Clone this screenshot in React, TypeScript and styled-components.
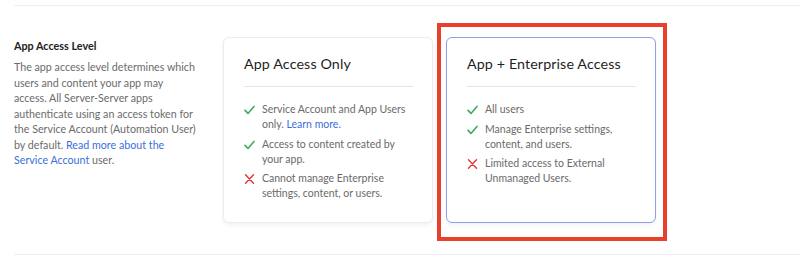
import styled, { createGlobalStyle } from 'styled-components'

const GlobalStyle = createGlobalStyle`
  html, body {
    margin: 0;
    padding: 0;
    background: #fff;
  }
  body {
    font-family: Lato, "Open Sans", Arial, sans-serif;
    -webkit-font-smoothing: antialiased;
  }
`

interface Feature {
  ok: boolean
  text: string
  link?: string
}

interface Plan {
  title: string
  selected?: boolean
  features: Feature[]
}

const plans: Plan[] = [
  {
    title: 'App Access Only',
    features: [
      { ok: true, text: 'Service Account and App Users only.', link: 'Learn more.' },
      { ok: true, text: 'Access to content created by your app.' },
      { ok: false, text: 'Cannot manage Enterprise settings, content, or users.' },
    ],
  },
  {
    title: 'App + Enterprise Access',
    selected: true,
    features: [
      { ok: true, text: 'All users' },
      { ok: true, text: 'Manage Enterprise settings, content, and users.' },
      { ok: false, text: 'Limited access to External Unmanaged Users.' },
    ],
  },
]

const CheckIcon = () => (
  <svg width="11" height="10" viewBox="0 0 11 10">
    <path d="M1 5.4 L4 8.4 L10 1.4" fill="none" stroke="#3aae5c" strokeWidth="1.6" strokeLinecap="round" strokeLinejoin="round" />
  </svg>
)

const CrossIcon = () => (
  <svg width="11" height="10" viewBox="0 0 11 10">
    <path d="M1.5 0.8 L9.5 9.2 M9.5 0.8 L1.5 9.2" fill="none" stroke="#e2363b" strokeWidth="1.4" strokeLinecap="round" />
  </svg>
)

const App = () => {
  return (
    <>
      <GlobalStyle />
      <Section>
        <Info>
          <h3 className="label">App Access Level</h3>
          <p className="desc">
            The app access level determines which users and content your app may access. All
            Server-Server apps authenticate using an access token for the Service Account
            (Automation User) by default. <a href="#">Read more about the Service Account</a> user.
          </p>
        </Info>
        <Cards>
          {plans.map((plan) => (
            <Card key={plan.title} $selected={plan.selected}>
              <h2 className="title">{plan.title}</h2>
              <ul>
                {plan.features.map((f) => (
                  <li key={f.text}>
                    <span className="icon">{f.ok ? <CheckIcon /> : <CrossIcon />}</span>
                    <span>
                      {f.text}
                      {f.link && (
                        <>
                          {' '}
                          <a href="#">{f.link}</a>
                        </>
                      )}
                    </span>
                  </li>
                ))}
              </ul>
              {plan.selected && <Highlight />}
            </Card>
          ))}
        </Cards>
      </Section>
    </>
  )
}

export default App

const Section = styled.section`
  margin: 5px 0 0 14px;
  border-top: 1px solid #efefef;
  border-bottom: 1px solid #efefef;
  padding: 31px 0 31px 0;
  display: flex;
  height: 186px;
`

const Info = styled.div`
  width: 183px;
  margin-right: 26px;
  padding-top: 2px;

  .label {
    margin: 0 0 6px;
    font-size: 10.8px;
    font-weight: 700;
    color: #222;
    line-height: 14px;
  }
  .desc {
    margin: 0;
    font-size: 10.7px;
    line-height: 15.5px;
    color: #6b6b6b;
  }
  a {
    color: #3b6fdc;
    text-decoration: none;
  }
`

const Cards = styled.div`
  display: flex;
  gap: 13px;
`

const Card = styled.div<{ $selected?: boolean }>`
  position: relative;
  width: 210px;
  box-sizing: border-box;
  padding: 18px 19px 0 20px;
  background: #fff;
  border: 1px solid ${(p) => (p.$selected ? '#8f9fe6' : '#ececec')};
  border-radius: 6px;
  box-shadow: 0 2px 4px rgba(0, 0, 0, 0.06);

  .title {
    margin: 0;
    font-size: 14.3px;
    font-weight: 400;
    color: #1f1f1f;
    line-height: 16px;
    padding-bottom: 14px;
    border-bottom: 1px solid #e6e6e6;
    letter-spacing: 0.1px;
  }
  ul {
    list-style: none;
    margin: 15px 0 0;
    padding: 0;
  }
  li {
    display: flex;
    font-size: 10.5px;
    line-height: 15px;
    color: #6a6a6a;
    margin-bottom: 4.5px;
  }
  .icon {
    display: flex;
    align-items: flex-start;
    flex: 0 0 18px;
    padding-top: 3px;
  }
  .icon svg {
    display: block;
  }
  a {
    color: #3b6fdc;
    text-decoration: none;
  }
`

const Highlight = styled.div`
  position: absolute;
  left: -10px;
  top: -15px;
  right: -12px;
  bottom: -19px;
  border: 4.5px solid #e8402b;
  pointer-events: none;
`
